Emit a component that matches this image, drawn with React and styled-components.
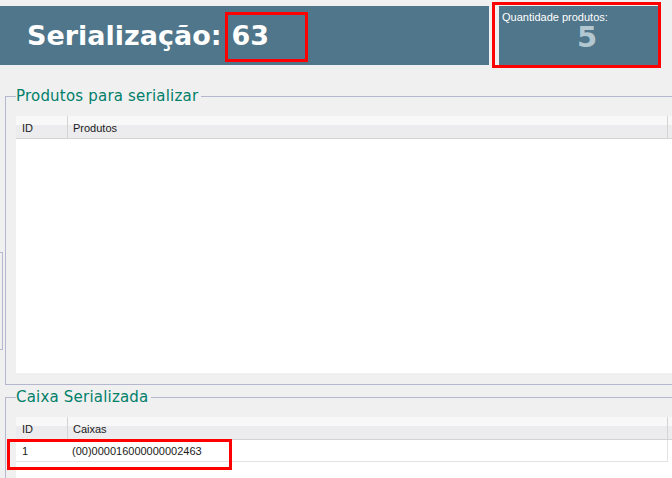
import React from "react";
import styled, { createGlobalStyle } from "styled-components";

const GlobalStyle = createGlobalStyle`
  html, body {
    margin: 0;
    padding: 0;
    background: #f0f0f0;
    overflow: hidden;
  }
  body {
    font-family: "Liberation Sans", Arial, sans-serif;
  }
`;

const Page = styled.div`
  width: 672px;
  height: 478px;
  overflow: hidden;
  background: #f0f0f0;
`;

const HeaderRow = styled.div`
  display: flex;
  align-items: flex-start;
  padding-top: 2px;
`;

const TitleBar = styled.div`
  display: flex;
  align-items: flex-start;
  flex: none;
  width: 489px;
  height: 59px;
  margin-top: 4px;
  padding-left: 27px;
  box-sizing: border-box;
  background: #4f768a;
  color: #fff;
  font-family: "DejaVu Sans", Verdana, sans-serif;
  font-weight: bold;
  font-size: 27px;
  line-height: 32px;
  white-space: nowrap;
`;

const TitleText = styled.span`
  margin-top: 14px;
`;

const ValueMark = styled.span`
  width: 83px;
  height: 50px;
  margin: 6px 0 0 3px;
  padding: 5px 0 0 4px;
  box-sizing: border-box;
  border: 3px solid #ff0000;
`;

const QtyFrame = styled.div`
  flex: none;
  margin-left: 3px;
  padding: 1px 0 0 4px;
  border: 3px solid #ff0000;
`;

const QtyBox = styled.div`
  width: 159px;
  height: 59px;
  padding: 5px 0 0 3px;
  box-sizing: border-box;
  background: #4f768a;
`;

const QtyLabel = styled.div`
  font-size: 11px;
  line-height: 13px;
  color: #fff;
`;

const QtyValue = styled.div`
  margin-top: -1px;
  padding-left: 75px;
  font-family: "DejaVu Sans", Verdana, sans-serif;
  font-weight: bold;
  font-size: 29px;
  line-height: 29px;
  color: #b3c7d1;
`;

const SectionRow = styled.div`
  display: flex;
  align-items: flex-start;
  margin-top: 20px;
`;

const SideStub = styled.div`
  flex: none;
  width: 2px;
  height: 96px;
  margin-top: 164px;
  border: 1px solid #b4b7cd;
  border-left: none;
`;

const Group = styled.fieldset`
  flex: none;
  width: 720px;
  min-width: 0;
  margin: ${({ $top }) => $top}px 0 0 ${({ $left }) => $left}px;
  padding: 11px 0 ${({ $bottom }) => $bottom}px 10px;
  border: 1px solid #b4b7cd;
  border-right: none;
  ${({ $open }) => ($open ? "border-bottom: none;" : "")}
`;

const Legend = styled.legend`
  padding: 0 3px 0 0;
  font-family: "DejaVu Sans", Verdana, sans-serif;
  font-size: 15px;
  line-height: 17px;
  letter-spacing: 0.2px;
  color: #007f6a;
`;

const Grid = styled.div`
  position: relative;
  background: #fff;
`;

const HeadRow = styled.div`
  display: flex;
  height: 22px;
  border-bottom: 1px solid #d3d3d3;
  background: linear-gradient(#f8f8f8 0, #f8f8f8 9px, #ececee 9px, #ececee 100%);
`;

const HeadCell = styled.div`
  flex: none;
  width: ${({ $w }) => $w}px;
  box-sizing: border-box;
  padding: 3px 0 0 ${({ $pad }) => $pad}px;
  border-right: 1px solid #d4d4d4;
  font-size: 11px;
  line-height: 19px;
  color: #1b1b1b;
`;

const Body = styled.div`
  height: ${({ $h }) => $h}px;
`;

const Row = styled.div`
  display: flex;
  height: 21px;
  border-bottom: 1px solid #e3e3e3;
  width: 652px;
`;

const Cell = styled.div`
  flex: none;
  width: ${({ $w }) => $w}px;
  box-sizing: border-box;
  padding: 2px 0 0 ${({ $pad }) => $pad}px;
  border-right: ${({ $line }) => ($line ? "1px solid #e3e3e3" : "none")};
  font-size: 11px;
  line-height: 19px;
  color: #1b1b1b;
`;

const RowMark = styled.div`
  position: absolute;
  left: -9px;
  top: 22px;
  width: 225px;
  height: 31px;
  box-sizing: border-box;
  border: 3px solid #ff0000;
`;

const columns = (second) => [
  { key: "id", title: "ID", w: 52, pad: 6 },
  { key: "name", title: second, w: 600, pad: 5 },
];

const TableHead = ({ second }) => (
  <HeadRow>
    {columns(second).map((c) => (
      <HeadCell key={c.key} $w={c.w} $pad={c.pad}>
        {c.title}
      </HeadCell>
    ))}
  </HeadRow>
);

const caixas = [{ id: 1, code: "(00)000016000000002463" }];

export default function App() {
  return (
    <Page>
      <GlobalStyle />
      <HeaderRow>
        <TitleBar>
          <TitleText>Serialização:</TitleText>
          <ValueMark>63</ValueMark>
        </TitleBar>
        <QtyFrame>
          <QtyBox>
            <QtyLabel>Quantidade produtos:</QtyLabel>
            <QtyValue>5</QtyValue>
          </QtyBox>
        </QtyFrame>
      </HeaderRow>

      <SectionRow>
        <SideStub />
        <Group $top={0} $left={2} $bottom={11}>
          <Legend>Produtos para serializar</Legend>
          <Grid>
            <TableHead second="Produtos" />
            <Body $h={234} />
          </Grid>
        </Group>
      </SectionRow>

      <Group $top={4} $left={5} $bottom={0} $open>
        <Legend>Caixa Serializada</Legend>
        <Grid>
          <TableHead second="Caixas" />
          <Body $h={120}>
            {caixas.map((c) => (
              <Row key={c.id}>
                <Cell $w={52} $pad={6}>
                  {c.id}
                </Cell>
                <Cell $w={600} $pad={4} $line>
                  {c.code}
                </Cell>
              </Row>
            ))}
          </Body>
          <RowMark />
        </Grid>
      </Group>
    </Page>
  );
}
